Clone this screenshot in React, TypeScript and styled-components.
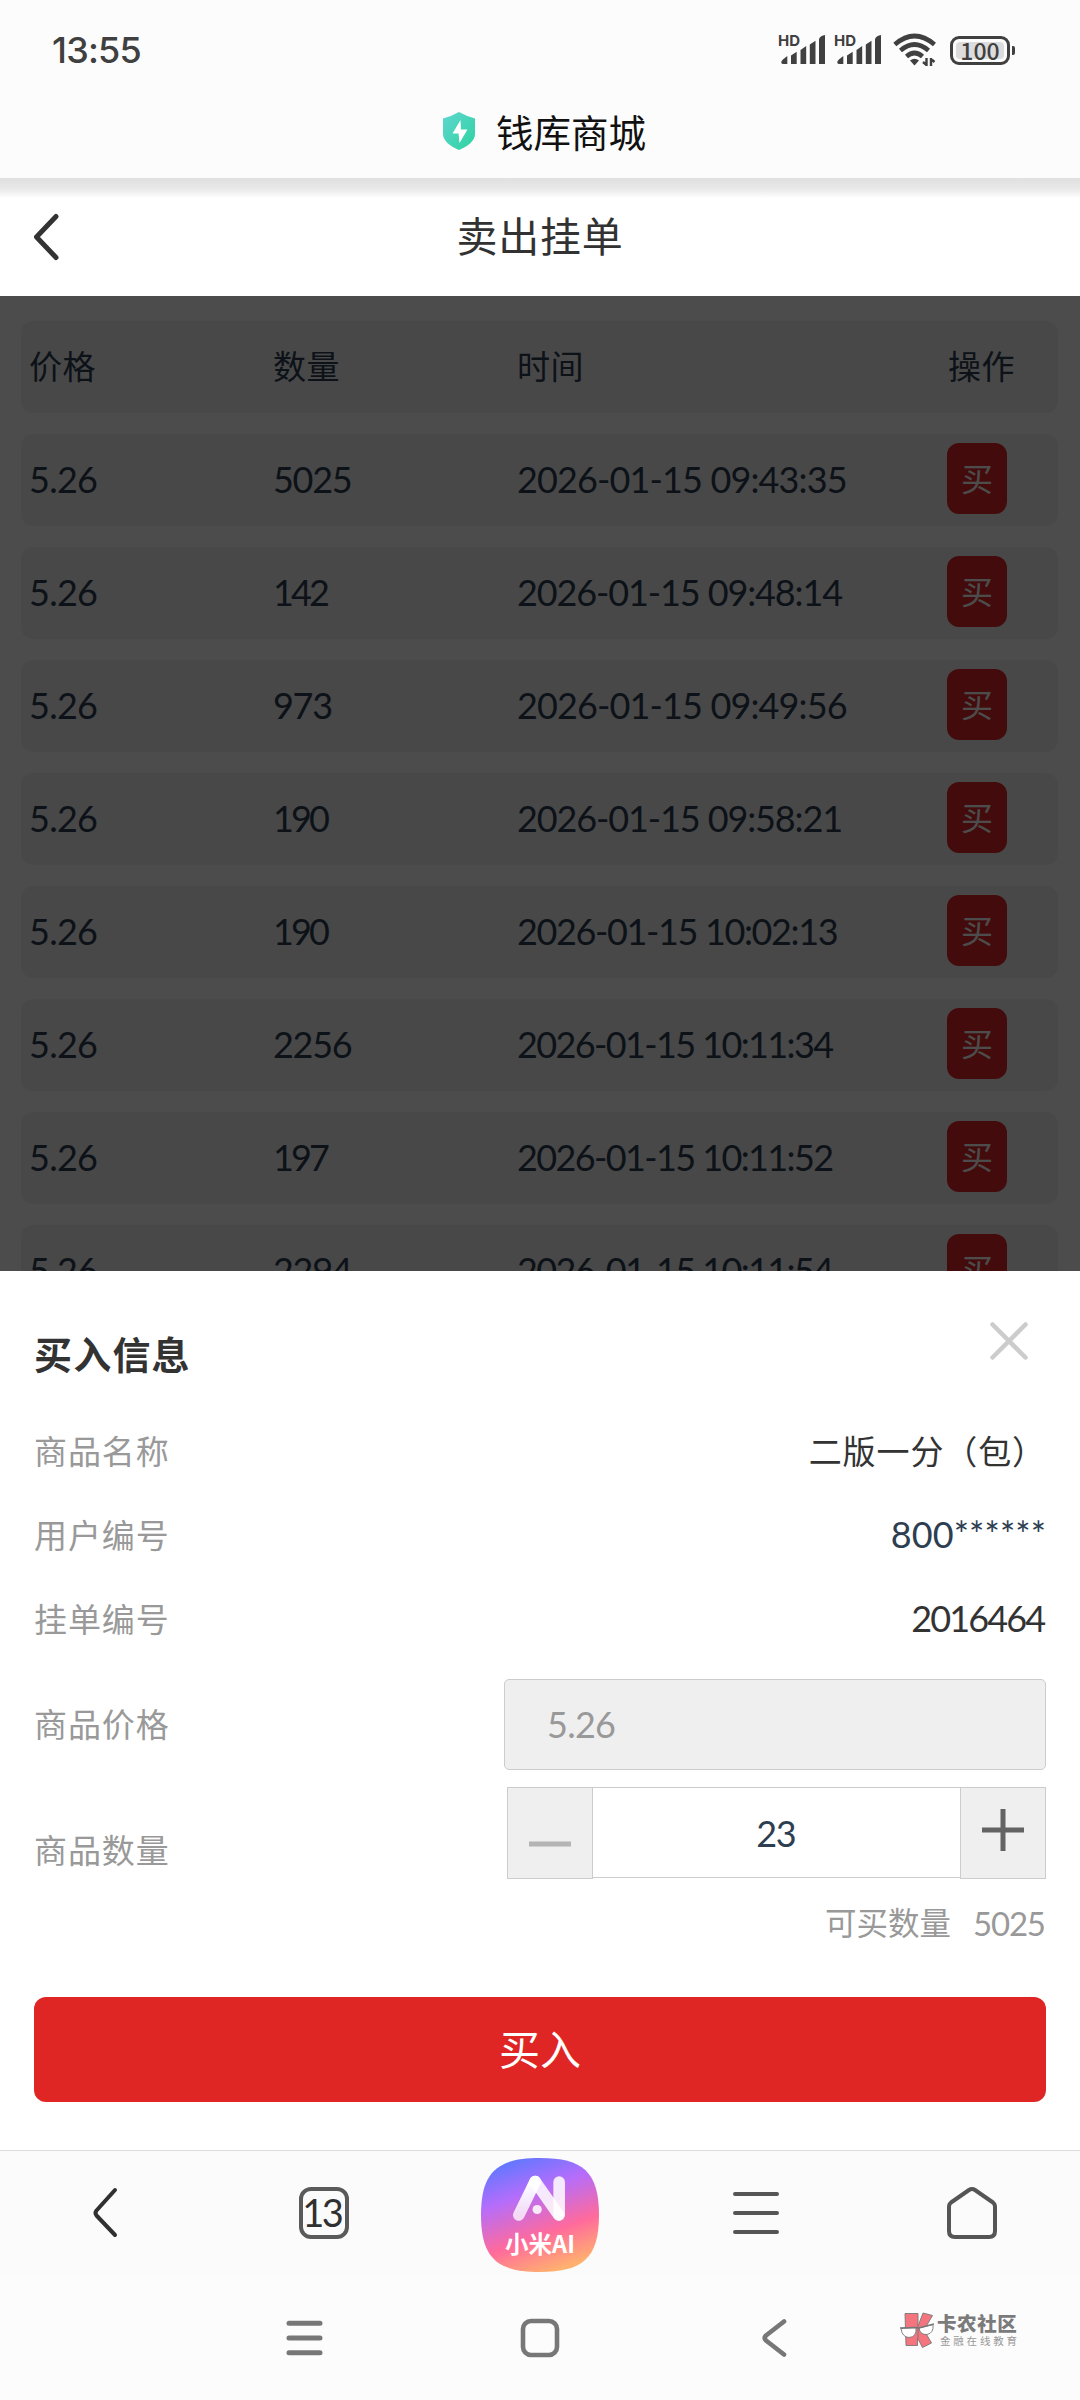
import React from "react";
import styled, { createGlobalStyle } from "styled-components";

const HAN = `"Noto Sans CJK SC", sans-serif`;
const NUM = `Lato, "Noto Sans CJK SC", sans-serif`;

const Global = createGlobalStyle`
  *, *::before, *::after { box-sizing: border-box; }
  body { margin: 0; background: #fcfcfc; font-family: ${HAN}; }
  button, input { font: inherit; margin: 0; padding: 0; border: 0; }
`;

const Screen = styled.div`
  position: relative;
  display: flex;
  flex-direction: column;
  width: 1080px;
  height: 2400px;
  overflow: hidden;
  background: #fcfcfc;
  svg { display: block; flex: none; }
`;

/* ---------- numerals ---------- */

const Numerals = styled.span<{ $size: number; $track: number }>`
  margin-right: ${(p) => -p.$track}px;
  white-space: pre;
  font-family: ${NUM};
  font-size: ${(p) => p.$size}px;
  font-kerning: none;
  letter-spacing: ${(p) => p.$track}px;
  line-height: 44px;
`;

/* Tightens tabular figures toward proportional widths: "1" gives up the most room. */
const adjust: Record<string, number> = { "1": -6, "-": 3, " ": 5, ":": 0, ".": 1 };

const fit = (text: string, size: number) => {
  const total = [...text].reduce((sum, ch) => sum + (adjust[ch] ?? -1.3), 0);
  return Math.round((total / text.length) * (size / 36) * 100) / 100;
};

type NumProps = { value: string; size?: number; track?: number };

const Num = ({ value, size = 36, track }: NumProps) => (
  <Numerals $size={size} $track={track ?? fit(value, size)}>
    {value}
  </Numerals>
);

/* ---------- system status bar ---------- */

const StatusBar = styled.div`
  display: flex;
  align-items: center;
  justify-content: space-between;
  height: 100px;
  padding: 0 65px 0 52px;
  color: #404040;
`;

const Clock = styled.span`
  font: 500 36px/44px Inter, sans-serif;
  letter-spacing: -0.800px;
`;

const StatusIcons = styled.div`
  display: flex;
  align-items: center;
`;

const Signal = styled.div`
  position: relative;
  width: 56px;
  height: 32px;
`;

const HdTag = styled.span`
  position: absolute;
  left: -1px;
  top: 0;
  font: 700 15px/14px Inter, sans-serif;
`;

const Wifi = styled.div`
  margin-left: 2px;
`;

const Battery = styled.div`
  display: flex;
  align-items: center;
  margin-left: 13px;
`;

const BatteryShell = styled.div`
  display: flex;
  width: 60px;
  height: 29px;
  padding: 3px;
  border: 3px solid #404040;
  border-radius: 9px;
`;

const BatteryFill = styled.div`
  display: flex;
  flex: 1;
  align-items: center;
  justify-content: center;
  border-radius: 4px;
  background: #dcdcdc;
  font: 500 23px/17px "Noto Sans CJK SC", sans-serif;
`;

const BatteryNub = styled.div`
  width: 3px;
  height: 9px;
  margin-left: 2px;
  border-radius: 0 2px 2px 0;
  background: #404040;
`;

const SignalIcon = () => (
  <Signal>
    <HdTag>HD</HdTag>
    <svg width="56" height="32" viewBox="0 0 56 32" fill="#404040">
      <path d="M2.200 28Q2.500 26 8.300 22V30H4Q2.200 30 2.200 28Z" />
      <path d="M12 21.500L17.700 17.700V30H12Z" />
      <path d="M21.500 16L27.200 12V30H21.500Z" />
      <path d="M30.800 10.500L36.500 6.700V30H30.800Z" />
      <path d="M40 5Q41.500 1.500 46 1V30H40Z" />
    </svg>
  </Signal>
);

const WifiIcon = () => (
  <svg width="44" height="34" viewBox="0 0 44 34" fill="none" stroke="#404040" strokeWidth="4.600">
    <path d="M1.800 11.500Q21.500 -5.500 41.500 11.500" />
    <path d="M7.500 17.500Q21.500 5.500 35.500 17.500" />
    <path d="M13.500 23.500Q21.500 16.500 29.500 23.500" />
    <path d="M17 27.500Q21.500 24 26 27.500L21.500 32.500Z" fill="#404040" stroke="none" />
    <path d="M33.500 25V33M33.500 32L30 29M38 33V25M38 26L41.500 29" strokeWidth="2.400" />
  </svg>
);

/* ---------- browser title ---------- */

const SiteBar = styled.div`
  display: flex;
  align-items: center;
  justify-content: center;
  gap: 20px;
  height: 78px;
  padding: 0 0 16px 8px;
  color: #111;
  font-size: 37.500px;
  line-height: 40px;
`;

const ShieldIcon = () => (
  <svg width="34" height="40" viewBox="0 0 34 40">
    <defs>
      <linearGradient id="shield" x1="0" y1="0" x2="1" y2="1">
        <stop offset="0" stopColor="#5fd6d0" />
        <stop offset="1" stopColor="#2dd3a0" />
      </linearGradient>
    </defs>
    <path d="M17 1Q24 5 33 7.500V23Q33 32 17 39Q1 32 1 23V7.500Q10 5 17 1Z" fill="url(#shield)" />
    <path d="M18.500 9L10.500 22.500H16.500L17.500 32L25.500 18.500H19Z" fill="#fff" />
  </svg>
);

/* ---------- page header ---------- */

const PageHeader = styled.header`
  display: grid;
  grid-template-columns: 90px 1fr 90px;
  align-items: center;
  height: 118px;
  background: linear-gradient(#e0e0e0 0, #e6e6e6 8px, #efefef 14px, #fff 20px);
`;

const BackButton = styled.button`
  display: flex;
  padding-left: 31px;
  background: none;
`;

const PageTitle = styled.h1`
  margin: -6px 0 0;
  color: #323233;
  font-size: 41px;
  font-weight: 400;
  line-height: 60px;
  letter-spacing: 0.800px;
  text-align: center;
`;

/* ---------- order list ---------- */

const ListArea = styled.main`
  position: relative;
  display: flex;
  flex-direction: column;
  gap: 21px;
  height: 975px;
  padding: 25px 22px 0 21px;
  overflow: hidden;
  background: #fff;
`;

const OrderRow = styled.div`
  display: grid;
  flex: none;
  grid-template-columns: 244px 244px 430px 1fr;
  align-items: center;
  height: 92px;
  padding: 0 0 3px 8px;
  border-radius: 12px;
  background: #f1f1f1;
  color: #2c3e50;
  font-size: 33px;
  line-height: 44px;
`;

const HeadCell = styled.span`
  margin-top: -2px;
  letter-spacing: 0.500px;
  &:last-child { padding-left: 1px; }
`;

const BuyButton = styled.button`
  width: 60px;
  height: 71px;
  padding-bottom: 2px;
  border-radius: 12px;
  background: #e02525;
  color: #fff;
  font-size: 32px;
  line-height: 69px;
`;

const Dim = styled.div`
  position: absolute;
  inset: 0;
  background: rgba(0, 0, 0, 0.7);
`;

/* ---------- purchase sheet ---------- */

const Sheet = styled.section`
  display: flex;
  flex-direction: column;
  height: 879px;
  padding: 32px 34px 0;
  background: #fff;
`;

const SheetHead = styled.div`
  display: flex;
  align-items: flex-start;
  justify-content: space-between;
  height: 106px;
  padding: 18px 17px 0 0;
`;

const SheetTitle = styled.h2`
  margin: 10px 0 0;
  color: #333;
  font-size: 38px;
  font-weight: 700;
  line-height: 44px;
  letter-spacing: 1.200px;
`;

const Field = styled.div<{ $height: number }>`
  display: flex;
  align-items: center;
  justify-content: space-between;
  height: ${(p) => p.$height}px;
`;

const Label = styled.span`
  padding-bottom: 2px;
  color: #999;
  font-size: 33px;
  line-height: 40px;
  letter-spacing: 0.900px;
`;

const Value = styled.span<{ $color?: string }>`
  display: flex;
  padding-bottom: 2px;
  color: ${(p) => p.$color ?? "#333"};
  font-size: 33px;
  line-height: 42px;
  letter-spacing: 0.900px;
`;

const PriceBox = styled.div`
  display: flex;
  align-items: center;
  width: 542px;
  height: 91px;
  padding-left: 42px;
  border: 1px solid #ccc;
  border-radius: 5px;
  background: #efefef;
  color: #999;
`;

const QuantityField = styled.div`
  display: flex;
  align-items: flex-start;
  justify-content: space-between;
  height: 118px;
  ${Label} { margin-top: 42px; }
`;

const Stepper = styled.div`
  display: flex;
  align-items: flex-start;
  width: 539px;
`;

const StepButton = styled.button`
  display: flex;
  justify-content: center;
  width: 86px;
  height: 92px;
  border: 1px solid #ccc;
  background: #efefef;
`;

const Count = styled.div`
  display: flex;
  flex: 1;
  align-items: center;
  justify-content: center;
  height: 91px;
  border: solid #ccc;
  border-width: 1px 0;
  color: #2c3e50;
`;

const Available = styled.div`
  display: flex;
  align-items: center;
  justify-content: flex-end;
  gap: 22px;
  height: 36px;
  color: #999;
  font-size: 31.500px;
  line-height: 36px;
`;

const AvailableLabel = styled.span`
  margin-top: -4px;
`;

const Submit = styled.button`
  height: 105px;
  margin-top: 56px;
  padding-bottom: 5px;
  border-radius: 12px;
  background: #e02525;
  color: #fff;
  font-size: 41px;
  line-height: 100px;
`;

/* ---------- browser toolbar and system navigation ---------- */

const Toolbar = styled.nav`
  display: grid;
  grid-template-columns: repeat(5, 1fr);
  align-items: center;
  justify-items: center;
  height: 125px;
  border-top: 1px solid #dcdcdc;
  background: #fbfbfb;
`;

const TabCount = styled.div`
  display: flex;
  align-items: center;
  justify-content: center;
  width: 50px;
  height: 52px;
  padding: 0 2px 2px 0;
  border: 4px solid #5a5a5a;
  border-radius: 12px;
  color: #303030;
`;

const AiButton = styled.div`
  display: grid;
  margin-top: 4px;
  > * { grid-area: 1 / 1; }
`;

const AiLabel = styled.span`
  z-index: 1;
  align-self: end;
  padding-bottom: 16px;
  color: #fff;
  font-size: 23.500px;
  font-weight: 700;
  line-height: 26px;
  text-align: center;
`;

const SystemNav = styled.nav`
  display: grid;
  grid-template-columns: 236px 236px 236px;
  align-items: center;
  justify-content: center;
  justify-items: center;
  height: 125px;
  background: #fcfcfc;
`;

const Watermark = styled.div`
  position: absolute;
  left: 900px;
  top: 2312px;
  display: flex;
  gap: 3px;
`;

const WatermarkText = styled.div`
  display: flex;
  flex-direction: column;
  color: #7b7b7b;
`;

const WatermarkName = styled.span`
  font-size: 19.500px;
  font-weight: 900;
  line-height: 22px;
  letter-spacing: 0.600px;
`;

const WatermarkSlogan = styled.span`
  padding-left: 3px;
  color: #999;
  font-size: 10.500px;
  line-height: 13px;
  letter-spacing: 2.800px;
`;

const AiIcon = () => (
  <svg width="118" height="114" viewBox="0 0 117 114" preserveAspectRatio="none">
    <defs>
      <linearGradient id="ai" x1="0.250" y1="0" x2="0.620" y2="1">
        <stop offset="0" stopColor="#5c78ff" />
        <stop offset="0.320" stopColor="#b56dfb" />
        <stop offset="0.680" stopColor="#ff6a9c" />
        <stop offset="1" stopColor="#ffb26e" />
      </linearGradient>
      <linearGradient id="leg" x1="0" y1="0" x2="0" y2="1">
        <stop offset="0" stopColor="#fff" />
        <stop offset="1" stopColor="#fff" stopOpacity="0.750" />
      </linearGradient>
    </defs>
    <path
      d="M58.500 0C101 0 117 14 117 57S101 114 58.500 114S0 100 0 57S16 0 58.500 0Z"
      fill="url(#ai)"
    />
    <g fill="none" strokeWidth="11.500" strokeLinecap="round" strokeLinejoin="round">
      <path d="M77.500 24V57" stroke="#fff" strokeOpacity="0.850" />
      <path d="M53.700 23.500L77 57" stroke="#fff" strokeOpacity="0.850" />
      <path d="M53.700 23.500L37.500 57" stroke="url(#leg)" />
    </g>
    <circle cx="55.700" cy="51.500" r="4.600" fill="#fff" fillOpacity="0.850" />
  </svg>
);

const KLogo = () => (
  <svg width="34" height="37" viewBox="0 0 34 37" stroke="#777" strokeWidth="0.900">
    <path d="M5 1.500H18V14L23 1L32.500 3.500L24 18L31.500 31L22.500 35.500L17.500 26V33.500H6Z" fill="#f5757f" />
    <path d="M18 14V26" />
    <path d="M1 16.500L16 15.500Q17 25 9 25.500Q2 25 1 16.500Z" fill="#fff" />
    <path d="M19 16L33 12.500Q34 21 27 22.500Q20 23 19 16Z" fill="#fff" />
    <path d="M0 16L16 15.500L19 16L34 12" fill="none" strokeWidth="1.400" />
  </svg>
);

const orders = [
  ["5025", "09:43:35"],
  ["142", "09:48:14"],
  ["973", "09:49:56"],
  ["190", "09:58:21"],
  ["190", "10:02:13"],
  ["2256", "10:11:34"],
  ["197", "10:11:52"],
  ["2294", "10:11:54"],
];

export default function App() {
  return (
    <Screen>
      <Global />
      <StatusBar>
        <Clock>13:55</Clock>
        <StatusIcons>
          <SignalIcon />
          <SignalIcon />
          <Wifi>
            <WifiIcon />
          </Wifi>
          <Battery>
            <BatteryShell>
              <BatteryFill>100</BatteryFill>
            </BatteryShell>
            <BatteryNub />
          </Battery>
        </StatusIcons>
      </StatusBar>

      <SiteBar>
        <ShieldIcon />
        <span>钱库商城</span>
      </SiteBar>

      <PageHeader>
        <BackButton aria-label="返回">
          <svg width="30" height="50" viewBox="0 0 30 50" fill="none" stroke="#333" strokeWidth="5" strokeLinecap="round" strokeLinejoin="round">
            <path d="M25 4.500L5.500 25L25 45.500" />
          </svg>
        </BackButton>
        <PageTitle>卖出挂单</PageTitle>
      </PageHeader>

      <ListArea>
        <OrderRow>
          <HeadCell>价格</HeadCell>
          <HeadCell>数量</HeadCell>
          <HeadCell>时间</HeadCell>
          <HeadCell>操作</HeadCell>
        </OrderRow>
        {orders.map(([amount, time]) => (
          <OrderRow key={amount + time}>
            <Num value="5.26" />
            <Num value={amount} />
            <Num value={`2026-01-15 ${time}`} />
            <BuyButton>买</BuyButton>
          </OrderRow>
        ))}
        <Dim />
      </ListArea>

      <Sheet>
        <SheetHead>
          <SheetTitle>买入信息</SheetTitle>
          <svg width="40" height="40" viewBox="0 0 40 40" stroke="#ccc" strokeWidth="4.500" strokeLinecap="round">
            <path d="M3.500 3.500L36.500 36.500M36.500 3.500L3.500 36.500" />
          </svg>
        </SheetHead>
        <Field $height={84}>
          <Label>商品名称</Label>
          <Value>二版一分（包）</Value>
        </Field>
        <Field $height={84}>
          <Label>用户编号</Label>
          <Value $color="#2c3e50">
            <Num value="800******" track={0.1} />
          </Value>
        </Field>
        <Field $height={84}>
          <Label>挂单编号</Label>
          <Value>
            <Num value="2016464" track={-1.9} />
          </Value>
        </Field>
        <Field $height={126}>
          <Label>商品价格</Label>
          <PriceBox>
            <Num value="5.26" />
          </PriceBox>
        </Field>
        <QuantityField>
          <Label>商品数量</Label>
          <Stepper>
            <StepButton aria-label="减少">
              <svg width="84" height="90" viewBox="0 0 84 90">
                <path d="M21 56H63" stroke="#b4b4b4" strokeWidth="5" />
              </svg>
            </StepButton>
            <Count>
              <Num value="23" />
            </Count>
            <StepButton aria-label="增加">
              <svg width="84" height="90" viewBox="0 0 84 90">
                <path d="M21 42H63M42 21V63" stroke="#636363" strokeWidth="5" />
              </svg>
            </StepButton>
          </Stepper>
        </QuantityField>
        <Available>
          <AvailableLabel>可买数量</AvailableLabel>
          <Num value="5025" size={33} />
        </Available>
        <Submit>买入</Submit>
      </Sheet>

      <Toolbar>
        <svg width="54" height="56" viewBox="0 0 54 56" fill="none" stroke="#303030" strokeWidth="4" strokeLinecap="round" strokeLinejoin="round">
          <path d="M34 5L15.500 25.500Q13.500 28 15.500 30.500L34 50" />
        </svg>
        <TabCount>
          <Num value="13" size={38} track={-2.5} />
        </TabCount>
        <AiButton>
          <AiIcon />
          <AiLabel>小米AI</AiLabel>
        </AiButton>
        <svg width="50" height="50" viewBox="0 0 50 50" stroke="#555" strokeWidth="4" strokeLinecap="round">
          <path d="M4 6H46M4 25H46M4 44H46" />
        </svg>
        <svg width="54" height="56" viewBox="0 0 54 56" fill="none" stroke="#555" strokeWidth="4" strokeLinejoin="round">
          <path d="M24 5Q27 3 30 5L48 17.500Q50 19 50 22V46Q50 52 44 52H10Q4 52 4 46V22Q4 19 6 17.500Z" />
        </svg>
      </Toolbar>

      <SystemNav>
        <svg width="38" height="40" viewBox="0 0 38 40" stroke="#777" strokeWidth="5" strokeLinecap="round">
          <path d="M4 5.300H35M4 20H35M4 34.700H35" />
        </svg>
        <svg width="40" height="40" viewBox="0 0 40 40" fill="none" stroke="#777" strokeWidth="4.600">
          <rect x="3" y="3" width="34" height="34" rx="8" />
        </svg>
        <svg width="30" height="44" viewBox="0 0 30 44" fill="none" stroke="#777" strokeWidth="4.600" strokeLinecap="round" strokeLinejoin="round">
          <path d="M23 5.500L5 19.500Q2.500 22 5 24.500L23 38.500" />
        </svg>
      </SystemNav>

      <Watermark>
        <KLogo />
        <WatermarkText>
          <WatermarkName>卡农社区</WatermarkName>
          <WatermarkSlogan>金融在线教育</WatermarkSlogan>
        </WatermarkText>
      </Watermark>
    </Screen>
  );
}
